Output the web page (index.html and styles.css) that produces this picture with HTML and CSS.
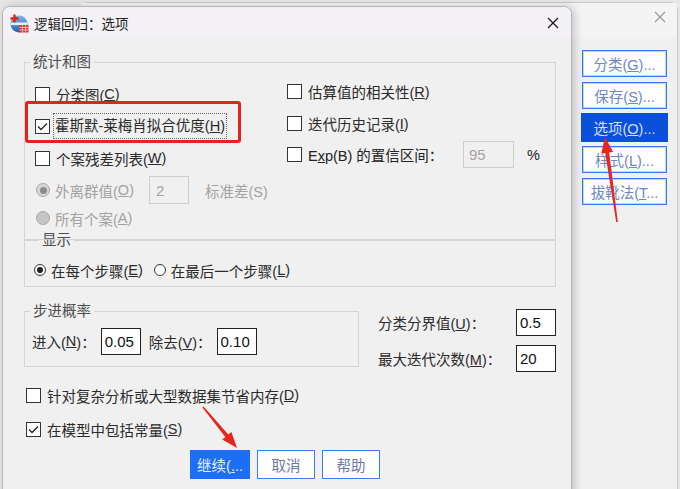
FILE: index.html
```html
<!DOCTYPE html>
<html>
<head>
    <meta charset="utf-8">
    <title>逻辑回归：选项</title>
    <link rel="stylesheet" href="styles.css">
</head>
<body>
<div class="desk">

    <!-- window behind the dialog -->
    <div class="back-win">
        <div class="back-title">
            <svg class="x-icon" width="12" height="12" viewBox="0 0 12 12"><path d="M1 1 L11 11 M11 1 L1 11" stroke="#9a9a9a" stroke-width="1.2" fill="none"/></svg>
        </div>
        <div class="back-body">
            <div class="side-btns">
                <button class="side-btn">分类(<u>G</u>)...</button>
                <button class="side-btn gap5">保存(<u>S</u>)...</button>
                <button class="side-btn active">选项(<u>O</u>)...</button>
                <button class="side-btn">样式(<u>L</u>)...</button>
                <button class="side-btn gap5">拔靴法(<u>T</u>...</button>
            </div>
        </div>
    </div>

    <!-- options dialog -->
    <div class="dialog">
        <div class="titlebar">
            <svg class="app-icon" width="20" height="20" viewBox="0 0 20 20">
                <defs>
                    <linearGradient id="ball" x1="0" y1="0" x2="0" y2="1">
                        <stop offset="0" stop-color="#7db6e6"/>
                        <stop offset="1" stop-color="#1f64b0"/>
                    </linearGradient>
                </defs>
                <circle cx="10" cy="11" r="8.5" fill="url(#ball)"/>
                <rect x="2" y="9.5" width="16" height="2.6" fill="#e8f2fb"/>
                <path d="M5.5 1.5 V9.5 M1.5 5.5 H9.5" stroke="#e2231a" stroke-width="2.4"/>
                <rect x="10.5" y="12" width="9" height="7.5" fill="#e8322a"/>
                <path d="M10.5 14.5 H19.5 M10.5 17 H19.5 M13.5 12 V19.5 M16.5 12 V19.5" stroke="#fbd0cc" stroke-width="0.8"/>
            </svg>
            <span class="title">逻辑回归：选项</span>
            <svg class="x-icon" width="12" height="12" viewBox="0 0 12 12"><path d="M1 1 L11 11 M11 1 L1 11" stroke="#1a1a1a" stroke-width="1.3" fill="none"/></svg>
        </div>

        <div class="dlg-body">
            <fieldset class="grp grp-stats">
                <legend>统计和图</legend>
                <div class="stats-cols">
                    <div class="col-left">
                        <div class="row r32"><span class="cb"></span>分类图(<u>C</u>)</div>
                        <div class="row r32">
                            <span class="cb cb-tight"><svg width="13" height="13" viewBox="0 0 13 13"><path d="M2 6.5 L5 9.5 L11 3.5" stroke="#222" stroke-width="1.3" fill="none"/></svg></span>
                            <span class="focus">霍斯默-莱梅肖拟合优度(<u>H</u>)</span>
                        </div>
                        <div class="row r32"><span class="cb"></span>个案残差列表(<u>W</u>)</div>
                        <div class="row r32 dis">
                            <span class="rd dis-on"></span>外离群值(<u>O</u>)
                            <input class="num dis-box n2" value="2" readonly>
                            <span class="sd">标准差(S)</span>
                        </div>
                        <div class="row r24 dis"><span class="rd dis-off"></span>所有个案(<u>A</u>)</div>
                    </div>
                    <div class="col-right">
                        <div class="row r33"><span class="cb"></span>估算值的相关性(<u>R</u>)</div>
                        <div class="row r31"><span class="cb"></span>迭代历史记录(<u>I</u>)</div>
                        <div class="row r31">
                            <span class="cb"></span>
                            <span class="exp-lbl">E<u>x</u>p(B) 的置信区间：</span>
                            <input class="num dis-box n95" value="95" readonly>
                            <span class="pct">%</span>
                        </div>
                    </div>
                </div>
            </fieldset>

            <fieldset class="grp grp-show">
                <legend>显示</legend>
                <div class="row show-row">
                    <span class="rd on"></span>在每个步骤(<u>E</u>)
                    <span class="rd rd-2"></span>在最后一个步骤(<u>L</u>)
                </div>
            </fieldset>

            <div class="step-row">
                <fieldset class="grp grp-step">
                    <legend>步进概率</legend>
                    <div class="row step-in">
                        进入(<u>N</u>)：<input class="num" value="0.05" readonly>
                        <span class="lbl-out">除去(<u>V</u>)：</span><input class="num" value="0.10" readonly>
                    </div>
                </fieldset>
                <div class="cut">
                    <span>分类分界值(<u>U</u>)：</span><input class="num" value="0.5" readonly>
                    <span>最大迭代次数(<u>M</u>)：</span><input class="num" value="20" readonly>
                </div>
            </div>

            <div class="row opt"><span class="cb"></span>针对复杂分析或大型数据集节省内存(<u>D</u>)</div>
            <div class="row opt opt-2">
                <span class="cb"><svg width="13" height="13" viewBox="0 0 13 13"><path d="M2 6.5 L5 9.5 L11 3.5" stroke="#222" stroke-width="1.3" fill="none"/></svg></span>在模型中包括常量(<u>S</u>)
            </div>

            <div class="btns">
                <button class="btn primary">继续(<u>.</u>..</button>
                <button class="btn">取消</button>
                <button class="btn">帮助</button>
            </div>
        </div>
    </div>

    <!-- annotations -->
    <div class="red-box"></div>
    <svg class="arrows" width="680" height="489" viewBox="0 0 680 489">
        <polygon points="616.2,222.1 605.2,153.1 601.3,153.6 605,137 613.1,152 609.2,152.5 617.8,221.9" fill="#e8261e"/>
        <polygon points="203.6,406.5 228.3,434.4 231.4,431.9 237,448 222.2,439.5 225.3,437 202.4,407.5" fill="#e8261e"/>
    </svg>
</div>
</body>
</html>
```

FILE: styles.css
```css
* {
    box-sizing: border-box;
}

body {
    margin: 0;
    background: #e6e6e6;
    font-family: "Liberation Sans", "Noto Sans CJK SC", sans-serif;
    font-size: 14.5px;
    color: #2b2b2b;
}

u {
    text-decoration: underline;
}

.desk {
    position: relative;
    width: 680px;
    height: 489px;
    overflow: hidden;
}

/* window behind */
.back-win {
    position: absolute;
    left: 80px;
    top: 2px;
    width: 598px;
    height: 520px;
    background: #f0f0f0;
    border: 1px solid #c9c9c9;
    border-radius: 8px;
}

.back-title {
    height: 34px;
    background: #f4f4f4;
    display: flex;
    justify-content: flex-end;
    padding: 8px 11px 0 0;
}

.back-body {
    display: flex;
    justify-content: flex-end;
    padding: 13px 10px 0 0;
}

.side-btns {
    display: flex;
    flex-direction: column;
    width: 85px;
}

.side-btn {
    height: 27px;
    margin-top: 4px;
    padding: 0;
    font: inherit;
    background: #fff;
    color: #6f86c4;
    border: 1px solid #2f7af5;
    box-shadow: inset 0 0 0 1px #bcd4fb;
}

.side-btn:first-child {
    margin-top: 0;
}

.side-btn.gap5 {
    margin-top: 5px;
}

.side-btn.active {
    height: 29px;
    margin: 4px -1px 0;
    background: #0a50d9;
    border-color: #0a50d9;
    box-shadow: none;
    color: #d2defa;
}

/* dialog */
.dialog {
    position: absolute;
    left: 2px;
    top: 6px;
    width: 570px;
    height: 500px;
    background: #f0f0f0;
    border: 1px solid #b4b4b4;
    border-radius: 8px 8px 0 0;
    box-shadow: 3px 0 8px rgba(0, 0, 0, 0.18);
    overflow: hidden;
}

.titlebar {
    height: 31px;
    background: #f4f1f6;
    display: flex;
    align-items: center;
    padding: 0 12px 0 6px;
}

.title {
    flex: 1;
    margin-left: 5px;
    font-size: 13.5px;
    color: #1e1e1e;
}

.dlg-body {
    padding: 14px 15px 0 21px;
}

.grp {
    margin: 0;
    padding: 0;
    min-width: 0;
    border: 1px solid #d4d4d4;
}

.grp legend {
    margin-left: 5px;
    padding: 0 3px;
    line-height: 20px;
    color: #4d4d4d;
}

.row {
    display: flex;
    align-items: center;
}

.grp-stats {
    height: 188px;
}

.stats-cols {
    display: grid;
    grid-template-columns: 252px 1fr;
    padding-left: 10px;
}

.col-left {
    padding-top: 6px;
}

.col-right {
    padding-top: 3px;
}

.r32 { height: 32px; }
.r24 { height: 24px; }
.r33 { height: 33px; }
.r31 { height: 31px; }

.cb {
    flex: none;
    width: 15px;
    height: 15px;
    margin-right: 6px;
    background: #fff;
    border: 1px solid #333;
    display: flex;
    align-items: center;
    justify-content: center;
}

.cb-tight {
    margin-right: 3px;
}

.focus {
    border: 1px dotted #666;
    padding: 2px 1px;
    line-height: 20px;
}

.dis {
    color: #a2a2a2;
}

.rd {
    flex: none;
    width: 12px;
    height: 12px;
    margin-right: 5px;
    border-radius: 50%;
    border: 1px solid #333;
    background: #fff;
    display: flex;
    align-items: center;
    justify-content: center;
}

.rd.on::after {
    content: "";
    width: 6px;
    height: 6px;
    border-radius: 50%;
    background: #222;
}

.rd.dis-on,
.rd.dis-off {
    width: 14px;
    height: 14px;
    margin-left: 1px;
    border-color: #a8a8a8;
    background: #d6d6d6;
}

.rd.dis-on::after {
    content: "";
    width: 7px;
    height: 7px;
    border-radius: 50%;
    background: #8c8c8c;
}

.rd.dis-off {
    background: #c6c6c6;
}

.num {
    width: 40px;
    height: 27px;
    padding: 0 0 0 3px;
    font: 15px "Liberation Sans", sans-serif;
    color: #111;
    background: #fff;
    border: 1px solid #222;
    outline: none;
}

.dis-box {
    border-color: #cdcdcd;
    background: #f0f0f0;
    color: #a4a4a4;
}

.n2 {
    height: 28px;
    margin-left: 15px;
    padding-left: 6px;
}

.sd {
    margin-left: 16px;
}

.exp-lbl {
    width: 155px;
    color: #222;
}

.n95 {
    width: 51px;
    padding-left: 5px;
}

.pct {
    margin-left: 13px;
    color: #222;
}

.grp-show {
    margin-top: -10px;
    padding: 6px 9px 2px;
}

.show-row {
    height: 28px;
}

.rd-2 {
    margin-left: 11px;
}

.step-row {
    display: flex;
    align-items: flex-start;
    margin-top: 14px;
}

.grp-step {
    width: 339px;
    height: 66px;
}

.step-in {
    height: 28px;
    margin-top: 6px;
    padding-left: 7px;
}

.step-in .num {
    margin-left: 5px;
}

.lbl-out {
    margin-left: 8px;
}

.cut {
    display: grid;
    grid-template-columns: 138px 40px;
    grid-auto-rows: 36px;
    align-items: center;
    margin-left: 19px;
    padding-top: 3px;
}

.opt {
    height: 28px;
    margin-top: 5px;
    padding-left: 2px;
}

.opt-2 {
    margin-top: 6px;
}

.btns {
    display: flex;
    gap: 7px;
    margin-top: 7px;
    padding-left: 166px;
}

.btn {
    width: 58px;
    height: 29px;
    padding: 0;
    font: inherit;
    background: #fff;
    color: #6b7b9f;
    border: 1px solid #3a7cf4;
}

.btn.primary {
    width: 60px;
    background: #1b6ef5;
    border-color: #1b6ef5;
    color: #e4ecff;
}

/* annotations */
.red-box {
    position: absolute;
    left: 25px;
    top: 101px;
    width: 216px;
    height: 42px;
    border: 3px solid #e8221b;
    border-radius: 3px;
}

.arrows {
    position: absolute;
    left: 0;
    top: 0;
}
```
